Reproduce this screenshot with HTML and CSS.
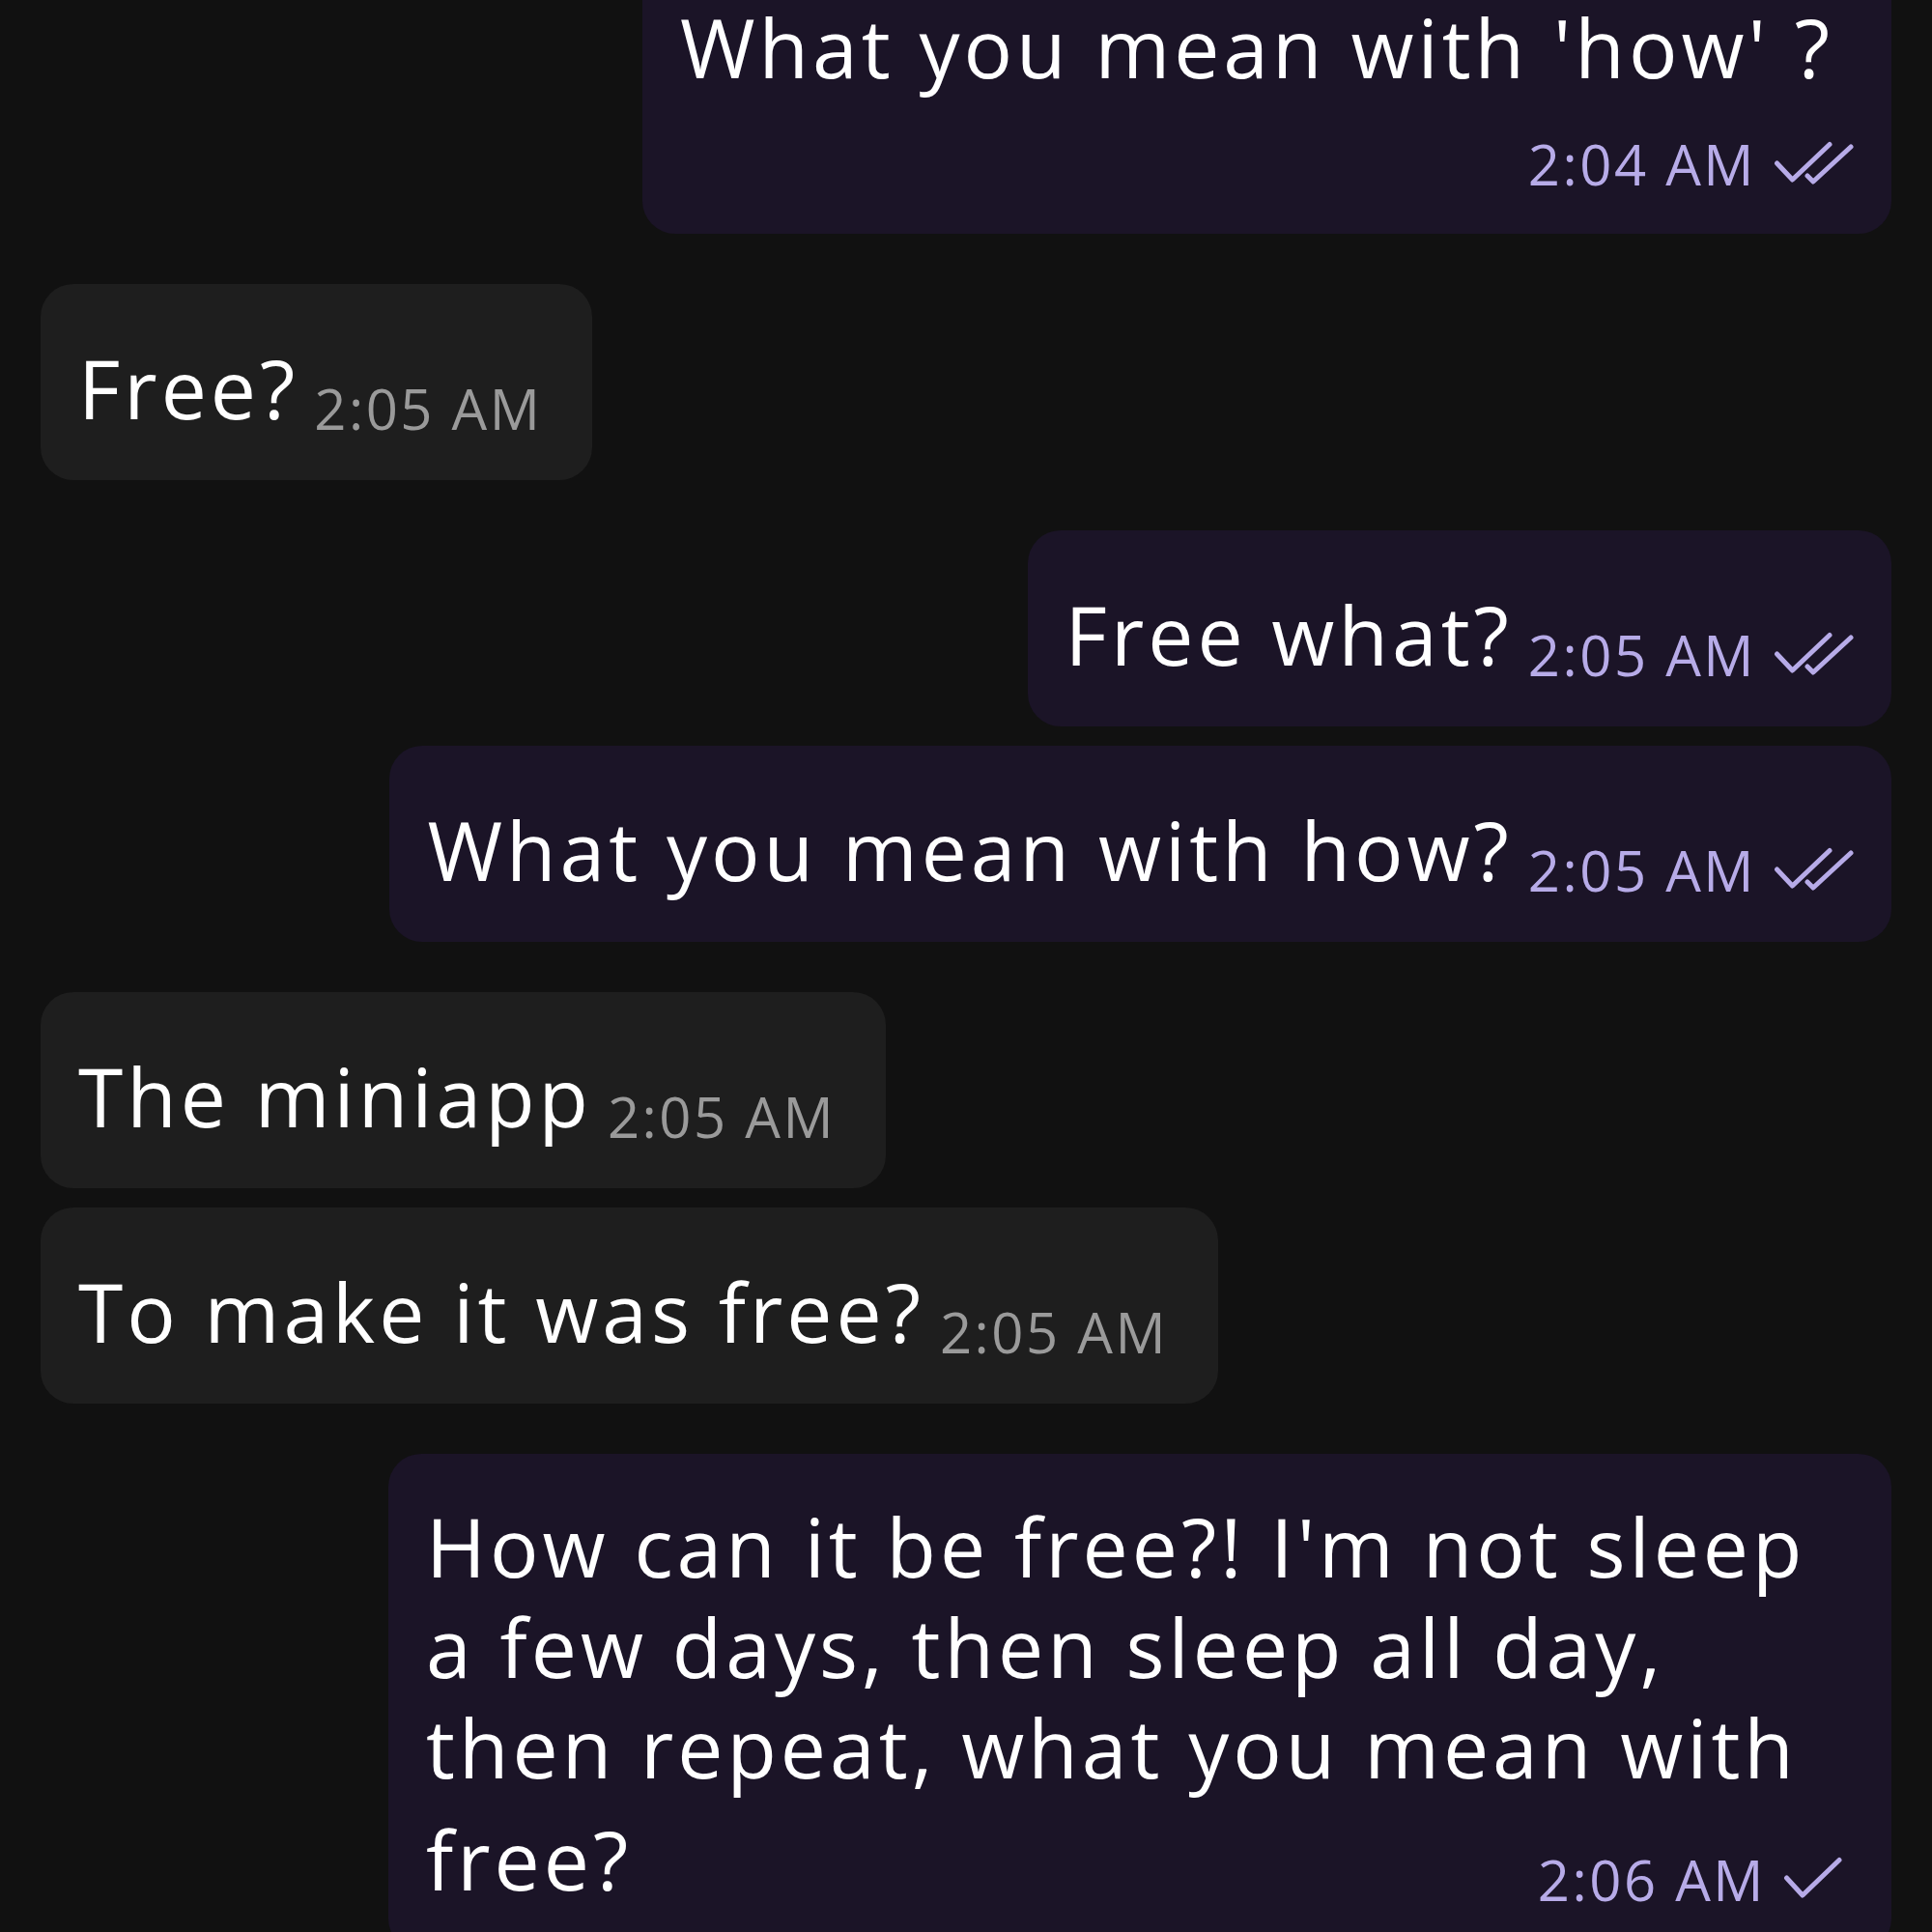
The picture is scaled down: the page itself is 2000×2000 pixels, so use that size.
FILE: index.html
```html
<!DOCTYPE html>
<html lang="en">
<head>
<meta charset="utf-8">
<title>Chat</title>
<link rel="stylesheet" href="styles.css">
</head>
<body>
<div class="chat">
  <div class="msg out">
    <div class="text block">What you mean with 'how' ?</div>
    <div class="meta-row">
      <span class="meta">2:04 AM<svg class="check double" viewBox="0 0 84 46" width="84" height="46"><path d="M3.5 23 L19.5 40 L58 3.5 M35 36 L41 42 L80 6"/></svg></span>
    </div>
  </div>

  <div class="msg in group">
    <span class="text">Free?</span><span class="meta">2:05 AM</span>
  </div>

  <div class="msg out group">
    <span class="text">Free what?</span><span class="meta">2:05 AM<svg class="check double" viewBox="0 0 84 46" width="84" height="46"><path d="M3.5 23 L19.5 40 L58 3.5 M35 36 L41 42 L80 6"/></svg></span>
  </div>

  <div class="msg out">
    <span class="text">What you mean with how?</span><span class="meta">2:05 AM<svg class="check double" viewBox="0 0 84 46" width="84" height="46"><path d="M3.5 23 L19.5 40 L58 3.5 M35 36 L41 42 L80 6"/></svg></span>
  </div>

  <div class="msg in group">
    <span class="text">The miniapp</span><span class="meta">2:05 AM</span>
  </div>

  <div class="msg in">
    <span class="text">To make it was free?</span><span class="meta">2:05 AM</span>
  </div>

  <div class="msg out group multi">
    <span class="text">How can it be free?! I'm not sleep a few days, then sleep all day, then repeat, what you mean with free?</span> <span class="meta">2:06 AM<svg class="check single" viewBox="0 0 74 46" width="74" height="46"><path d="M3.5 22 L20 40 L58 3.5"/></svg></span>
  </div>
</div>
</body>
</html>
```

FILE: styles.css
```css
html, body {
  margin: 0;
  padding: 0;
}

body {
  background: #111111;
  height: 2000px;
  overflow: hidden;
  font-family: "Open Sans", "Noto Sans", sans-serif;
}

.chat {
  display: flex;
  flex-direction: column;
  padding: 0 42px;
  margin-top: -47px;
}

.msg {
  box-sizing: border-box;
  max-width: 1590px;
  padding: 44px 38px 43px 39px;
  border-radius: 34px;
  font-size: 84px;
  line-height: 104px;
  letter-spacing: 4px;
  color: #ffffff;
  margin-top: 20px;
}

.msg.group {
  margin-top: 52px;
}

.msg:first-child {
  margin-top: 0;
}

.msg.out {
  align-self: flex-end;
  background: #1b1427;
}

.msg.in {
  align-self: flex-start;
  background: #1e1e1e;
  padding-right: 52px;
}

.msg.multi {
  max-width: 1556px;
  text-align-last: justify;
}

.text.block {
  padding-right: 22px;
}

.meta {
  display: inline-flex;
  align-items: baseline;
  gap: 18px;
  font-size: 58px;
  line-height: 58px;
  letter-spacing: 2.5px;
  vertical-align: -11px;
  padding-top: 56px;
  margin-left: 16px;
  text-align-last: auto;
}

.out .meta {
  color: #b7abe8;
}

.in .meta {
  color: #9a9a9a;
}

.meta-row {
  display: flex;
  justify-content: flex-end;
  align-items: flex-end;
  height: 98px;
}

.meta-row .meta {
  padding-top: 0;
  margin-left: 0;
  vertical-align: baseline;
}

.check {
  display: block;
  flex: none;
}

.check path {
  fill: none;
  stroke: #b7abe8;
  stroke-width: 5;
  stroke-linecap: round;
  stroke-linejoin: round;
}
```
